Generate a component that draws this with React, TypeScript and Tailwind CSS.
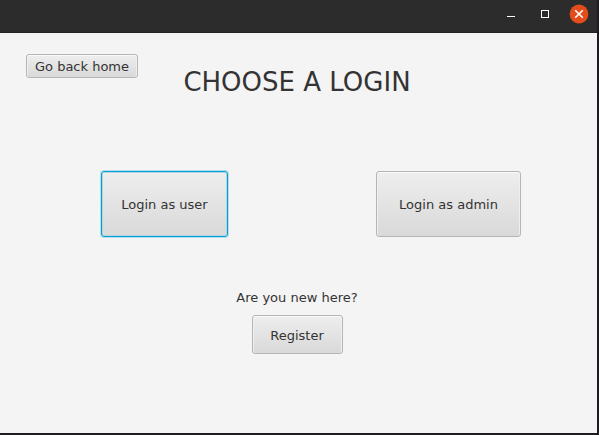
import type { ButtonHTMLAttributes } from "react";
import { clsx } from "clsx";

type ActionButtonProps = ButtonHTMLAttributes<HTMLButtonElement> & {
  highlighted?: boolean;
};

function ActionButton({ highlighted = false, className, children, ...rest }: ActionButtonProps) {
  return (
    <button
      type="button"
      className={clsx(
        "rounded-[3px] border bg-linear-to-b from-[#eeeeee] to-[#d9d9d9] pt-0.5 whitespace-nowrap outline-none",
        highlighted
          ? "border-[#039ed3] shadow-[0_0_0_1px_#b4dfed,inset_0_0_0_1px_#b5d5e0]"
          : "border-[#b5b5b5] shadow-[inset_0_1px_0_#fafafa,inset_1px_0_0_#efefef,inset_-1px_0_0_#efefef]",
        className,
      )}
      {...rest}
    >
      {children}
    </button>
  );
}

function TitleBar() {
  return (
    <header className="flex h-[33px] items-start justify-end border-b border-[#222222] bg-[#2c2c2c] pt-1 pr-2 text-white">
      <div className="mr-[14px] flex gap-[14px]">
        <button type="button" aria-label="Minimize" className="flex size-5 items-center justify-center">
          <svg width="20" height="20" viewBox="0 0 20 20" fill="currentColor" shapeRendering="crispEdges">
            <path d="M6 12h8v1H6z" />
          </svg>
        </button>
        <button type="button" aria-label="Maximize" className="flex size-5 items-center justify-center">
          <svg width="20" height="20" viewBox="0 0 20 20" fill="currentColor" shapeRendering="crispEdges">
            <path fillRule="evenodd" d="M6 6h8v8H6zM7 7v6h6V7z" />
          </svg>
        </button>
      </div>
      <button type="button" aria-label="Close" className="flex size-5 items-center justify-center">
        <svg width="20" height="20" viewBox="0 0 20 20" fill="none">
          <circle cx="10" cy="10" r="9.4" fill="#e34c1b" />
          <path d="M6.2 6.2l7.6 7.6M13.8 6.2l-7.6 7.6" stroke="currentColor" strokeWidth="1.6" />
        </svg>
      </button>
    </header>
  );
}

export default function App() {
  return (
    <div className="flex min-h-screen flex-col border-r-2 border-b-2 border-[#1e1c1e] bg-[#f4f4f4] font-['DejaVu_Sans',sans-serif] text-[13px] leading-5 text-[#333333]">
      <TitleBar />
      <main className="flex-1 pt-[21px] pr-[3px] pb-6">
        <div className="grid grid-cols-[1fr_auto_1fr] items-start">
          <div className="pl-[26px]">
            <ActionButton className="block h-6 w-28">Go back home</ActionButton>
          </div>
          <h1 className="mt-3 text-[26px] leading-8">CHOOSE A LOGIN</h1>
        </div>

        <div className="mt-[73px] flex justify-between pr-[73px] pl-[101px]">
          <ActionButton highlighted className="h-[66px] w-[127px]">
            Login as user
          </ActionButton>
          <ActionButton className="h-[66px] w-[145px]">Login as admin</ActionButton>
        </div>

        <div className="mt-[51px] flex flex-col items-center gap-[7px]">
          <p>Are you new here?</p>
          <ActionButton className="h-[39px] w-[91px]">Register</ActionButton>
        </div>
      </main>
    </div>
  );
}
